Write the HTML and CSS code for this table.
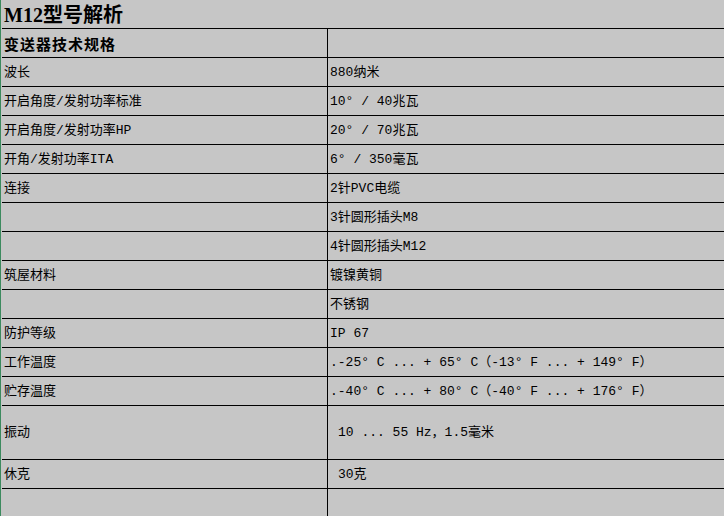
FILE: index.html
```html
<!DOCTYPE html>
<html lang="zh-CN">
<head>
<meta charset="utf-8">
<title>M12型号解析</title>
<link rel="stylesheet" href="styles.css">
</head>
<body>
<div class="page">
  <div class="title">M12型号解析</div>
  <div class="sheet">
    <div class="cell key head">变送器技术规格</div><div class="cell val"></div>
    <div class="cell key">波长</div><div class="cell val">880纳米</div>
    <div class="cell key">开启角度/发射功率标准</div><div class="cell val">10° / 40兆瓦</div>
    <div class="cell key">开启角度/发射功率HP</div><div class="cell val">20° / 70兆瓦</div>
    <div class="cell key">开角/发射功率ITA</div><div class="cell val">6° / 350毫瓦</div>
    <div class="cell key">连接</div><div class="cell val">2针PVC电缆</div>
    <div class="cell key"></div><div class="cell val">3针圆形插头M8</div>
    <div class="cell key"></div><div class="cell val">4针圆形插头M12</div>
    <div class="cell key">筑屋材料</div><div class="cell val">镀镍黄铜</div>
    <div class="cell key"></div><div class="cell val">不锈钢</div>
    <div class="cell key">防护等级</div><div class="cell val">IP 67</div>
    <div class="cell key">工作温度</div><div class="cell val">.-25° C ... + 65° C（-13° F ... + 149° F）</div>
    <div class="cell key">贮存温度</div><div class="cell val">.-40° C ... + 80° C（-40° F ... + 176° F）</div>
    <div class="cell key tall">振动</div><div class="cell val tall indent">10 ... 55 Hz，1.5毫米</div>
    <div class="cell key">休克</div><div class="cell val indent">30克</div>
    <div class="cell key last"></div><div class="cell val last"></div>
  </div>
</div>
</body>
</html>
```
FILE: styles.css
```css
html, body {
  margin: 0;
  padding: 0;
  background: #c6c6c6;
  overflow: hidden;
}
body {
  width: 724px;
  height: 516px;
  box-sizing: border-box;
  border-left: 1px solid #3c8a5e;
  font-family: "Liberation Mono", "Noto Sans CJK SC", monospace;
  font-size: 13px;
  color: #000;
}
.page {
  padding-left: 1px;
}
.title {
  height: 28px;
  line-height: 30px;
  padding-left: 2px;
  font-family: "Liberation Serif", "Noto Sans CJK SC", serif;
  font-weight: bold;
  font-size: 20px;
  border-bottom: 1px solid #000;
}
.sheet {
  display: grid;
  grid-template-columns: 325px 1fr;
}
.cell {
  height: 28px;
  line-height: 29px;
  border-bottom: 1px solid #000;
  white-space: nowrap;
  overflow: hidden;
}
.key {
  padding-left: 2px;
}
.val {
  border-left: 1px solid #000;
  padding-left: 2px;
}
.head {
  font-weight: bold;
  font-family: "Noto Sans CJK SC", sans-serif;
  font-size: 15px;
  letter-spacing: 1px;
}
.tall {
  height: 53px;
  line-height: 54px;
}
.indent {
  padding-left: 10px;
}
.last {
  height: 40px;
  border-bottom: none;
}
```
